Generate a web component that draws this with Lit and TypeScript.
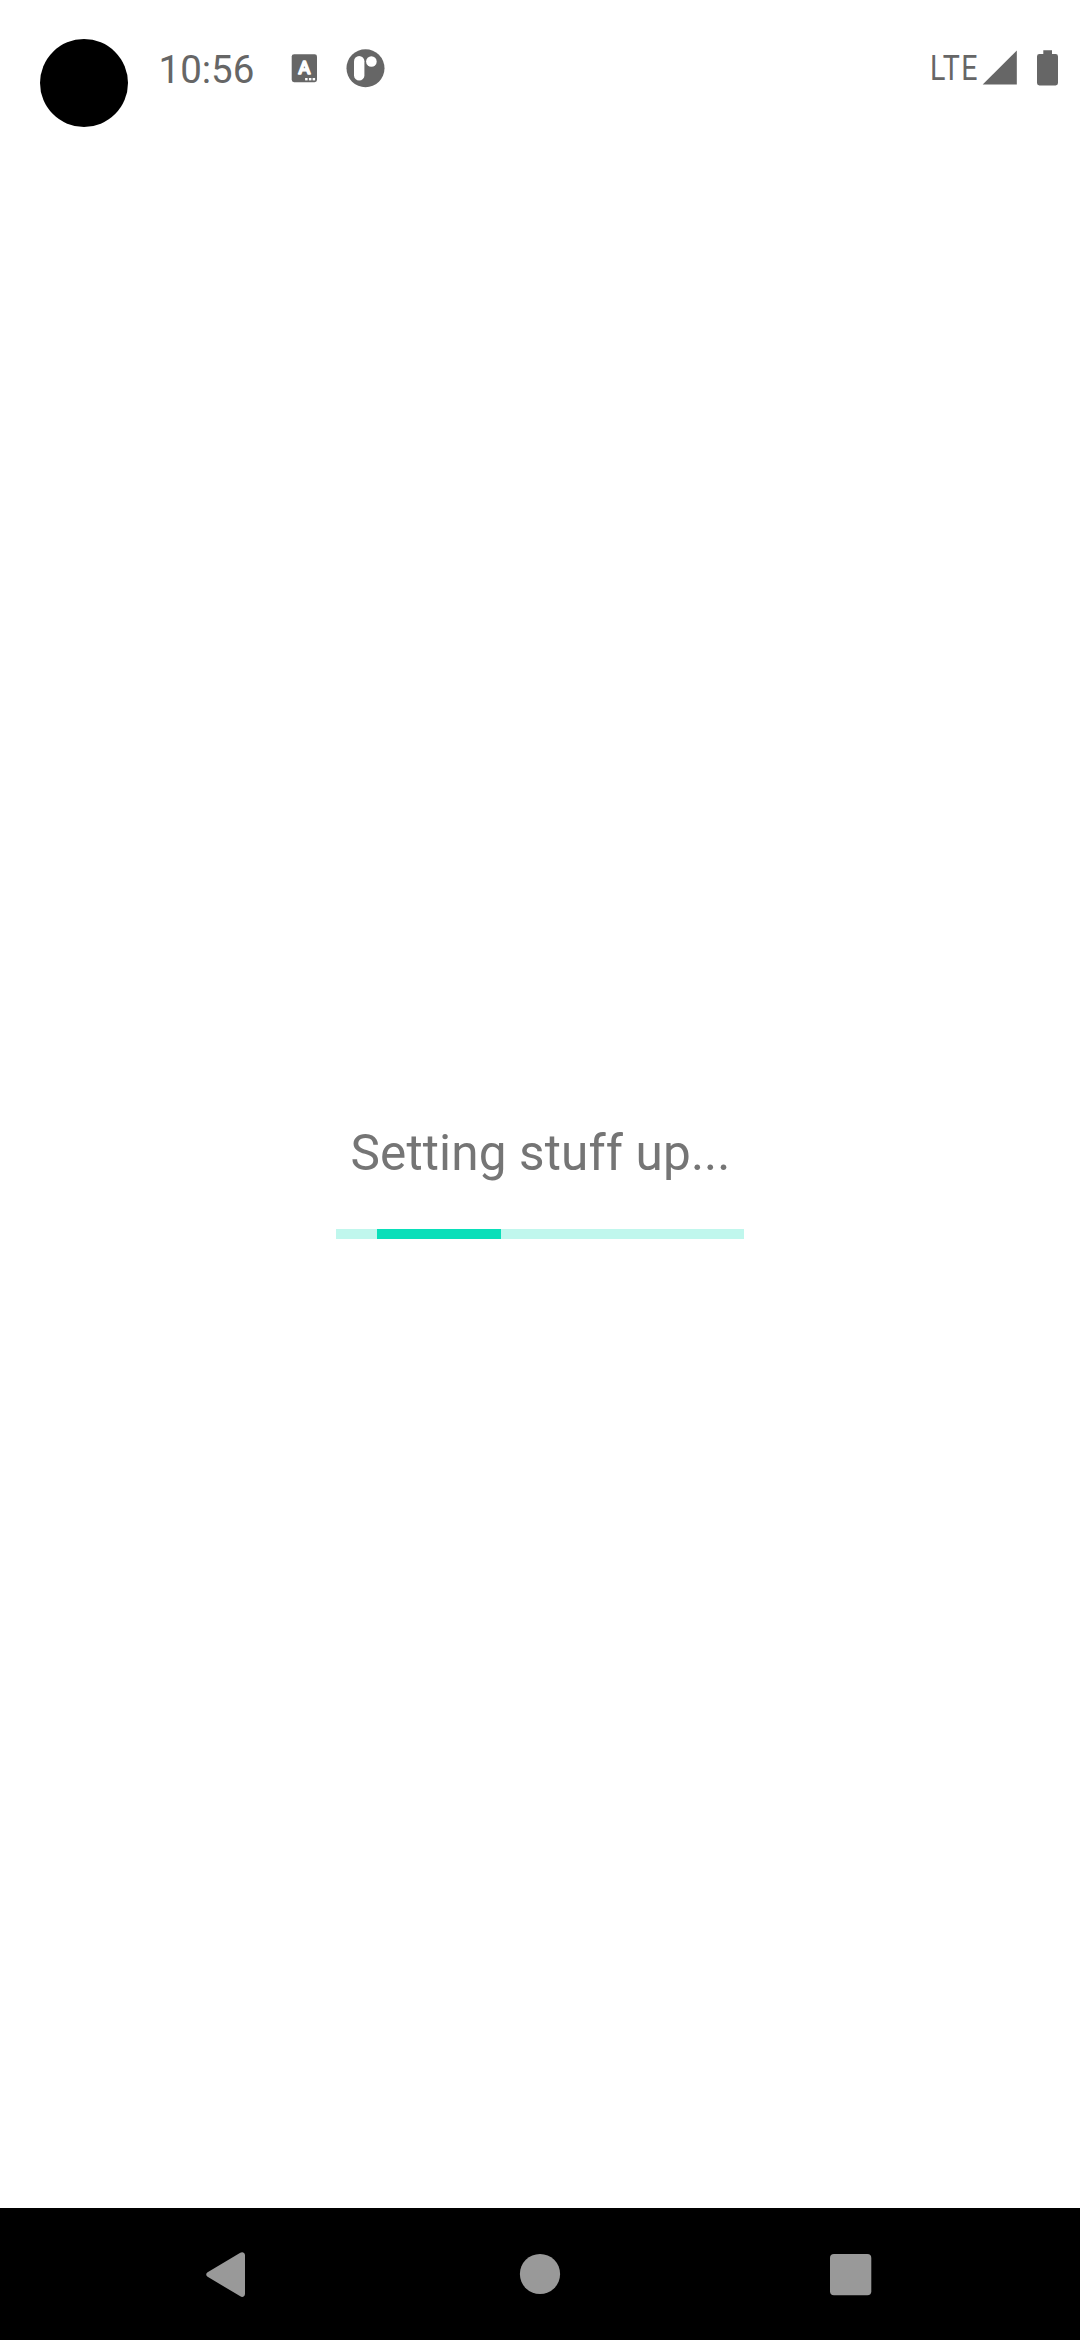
import { LitElement, html, css } from "lit";
import { customElement, property } from "lit/decorators.js";

@customElement("status-bar")
class StatusBar extends LitElement {
  @property() time = "10:56";

  static styles = css`
    :host {
      display: flex;
      height: 136px;
      flex: none;
      align-items: flex-start;
      color: #666;
      font-family: Roboto, sans-serif;
    }
    .camera {
      width: 88px;
      height: 88px;
      margin: 39px 0 0 40px;
      border-radius: 50%;
      background: #000;
    }
    .time {
      width: 100.5px;
      margin: 47px 0 0 30.5px;
      font-size: 38.5px;
      line-height: 45px;
      white-space: nowrap;
    }
    .notifications {
      margin: 44px auto 0 27px;
    }
    .system {
      margin: 44px 16px 0 0;
    }
    svg {
      display: block;
      fill: currentColor;
    }
    .letter {
      font: 500 18.5px Roboto, sans-serif;
      fill: #fff;
      stroke: #fff;
      stroke-width: 1.3;
      stroke-linejoin: round;
    }
    .network {
      font: 400 34.4px Roboto, sans-serif;
      letter-spacing: 1.6px;
    }
    .cut {
      fill: #fff;
    }
  `;

  render() {
    return html`
      <div class="camera"></div>
      <div class="time">${this.time}</div>
      <svg class="notifications" width="104" height="48" viewBox="286 44 104 48">
        <rect x="291.7" y="54.2" width="25.3" height="28" rx="2.4" />
        <text class="letter" x="304.3" y="74.1" text-anchor="middle">A</text>
        <rect class="cut" x="305.1" y="78" width="2.5" height="2.4" />
        <rect class="cut" x="308.9" y="78" width="2.5" height="2.4" />
        <rect class="cut" x="312.6" y="78" width="2.5" height="2.4" />
        <circle cx="365.5" cy="68.3" r="19" />
        <rect class="cut" x="354" y="56" width="10.4" height="24.6" rx="5.2" />
        <circle class="cut" cx="371.4" cy="61.5" r="5.3" />
      </svg>
      <svg class="system" width="138" height="48" viewBox="926 44 138 48">
        <text class="network" transform="translate(930 79.8) scale(.83 1)">LTE</text>
        <path d="M982.7 84.5 1016.8 50.5V84.5Z" />
        <path d="M1043.3 50.2h8.7v3.8h3.6a2.4 2.4 0 0 1 2.4 2.4v26.6a2.4 2.4 0 0 1-2.4 2.4h-16.2a2.4 2.4 0 0 1-2.4-2.4V56.400a2.4 2.4 0 0 1 2.4-2.4h3.900Z" />
      </svg>
    `;
  }
}

@customElement("progress-bar")
class ProgressBar extends LitElement {
  @property({ type: Number }) start = 41;
  @property({ type: Number }) length = 124;

  static styles = css`
    :host {
      display: flex;
      width: 408px;
      height: 10px;
      background: #c0f7ed;
    }
    .segment {
      background: #09dfb9;
    }
  `;

  render() {
    return html`<div
      class="segment"
      style="margin-left:${this.start}px;width:${this.length}px"
    ></div>`;
  }
}

@customElement("nav-bar")
class NavBar extends LitElement {
  static styles = css`
    :host {
      display: flex;
      flex: none;
      height: 132px;
      justify-content: center;
      align-items: center;
      background: #000;
    }
    .key {
      display: flex;
      width: 311px;
      justify-content: center;
    }
    svg {
      display: block;
      fill: #999;
    }
  `;

  render() {
    return html`
      <div class="key">
        <svg width="60" height="60" viewBox="199 2244 60 60">
          <path d="M207.600 2272.200 240.300 2252.700Q242.500 2251.500 244.300 2253.200 245 2254 245 2255.300V2293.700Q245 2295.300 244 2296.200 242.300 2297.500 240.300 2296.300L207.600 2276.800Q206.200 2275.800 206.200 2274.500 206.200 2273.200 207.600 2272.200Z" />
        </svg>
      </div>
      <div class="key">
        <svg width="60" height="60" viewBox="510 2244 60 60">
          <circle cx="540" cy="2274" r="20.1" />
        </svg>
      </div>
      <div class="key">
        <svg width="60" height="60" viewBox="821 2244 60 60">
          <rect x="830" y="2254" width="41.3" height="41.3" rx="4" />
        </svg>
      </div>
    `;
  }
}

@customElement("app-root")
class AppRoot extends LitElement {
  static styles = css`
    :host {
      display: flex;
      flex-direction: column;
      width: 1080px;
      height: 2340px;
      background: #fff;
      font-family: Roboto, sans-serif;
    }
    .content {
      display: flex;
      flex: 1;
      flex-direction: column;
      align-items: center;
      padding-top: 988px;
    }
    .message {
      margin-bottom: 47px;
      padding-left: 1px;
      color: #757575;
      font-size: 49.5px;
      letter-spacing: 0.13px;
      line-height: 58px;
      white-space: nowrap;
    }
  `;

  render() {
    return html`
      <status-bar></status-bar>
      <main class="content">
        <div class="message">Setting stuff up...</div>
        <progress-bar></progress-bar>
      </main>
      <nav-bar></nav-bar>
    `;
  }
}
